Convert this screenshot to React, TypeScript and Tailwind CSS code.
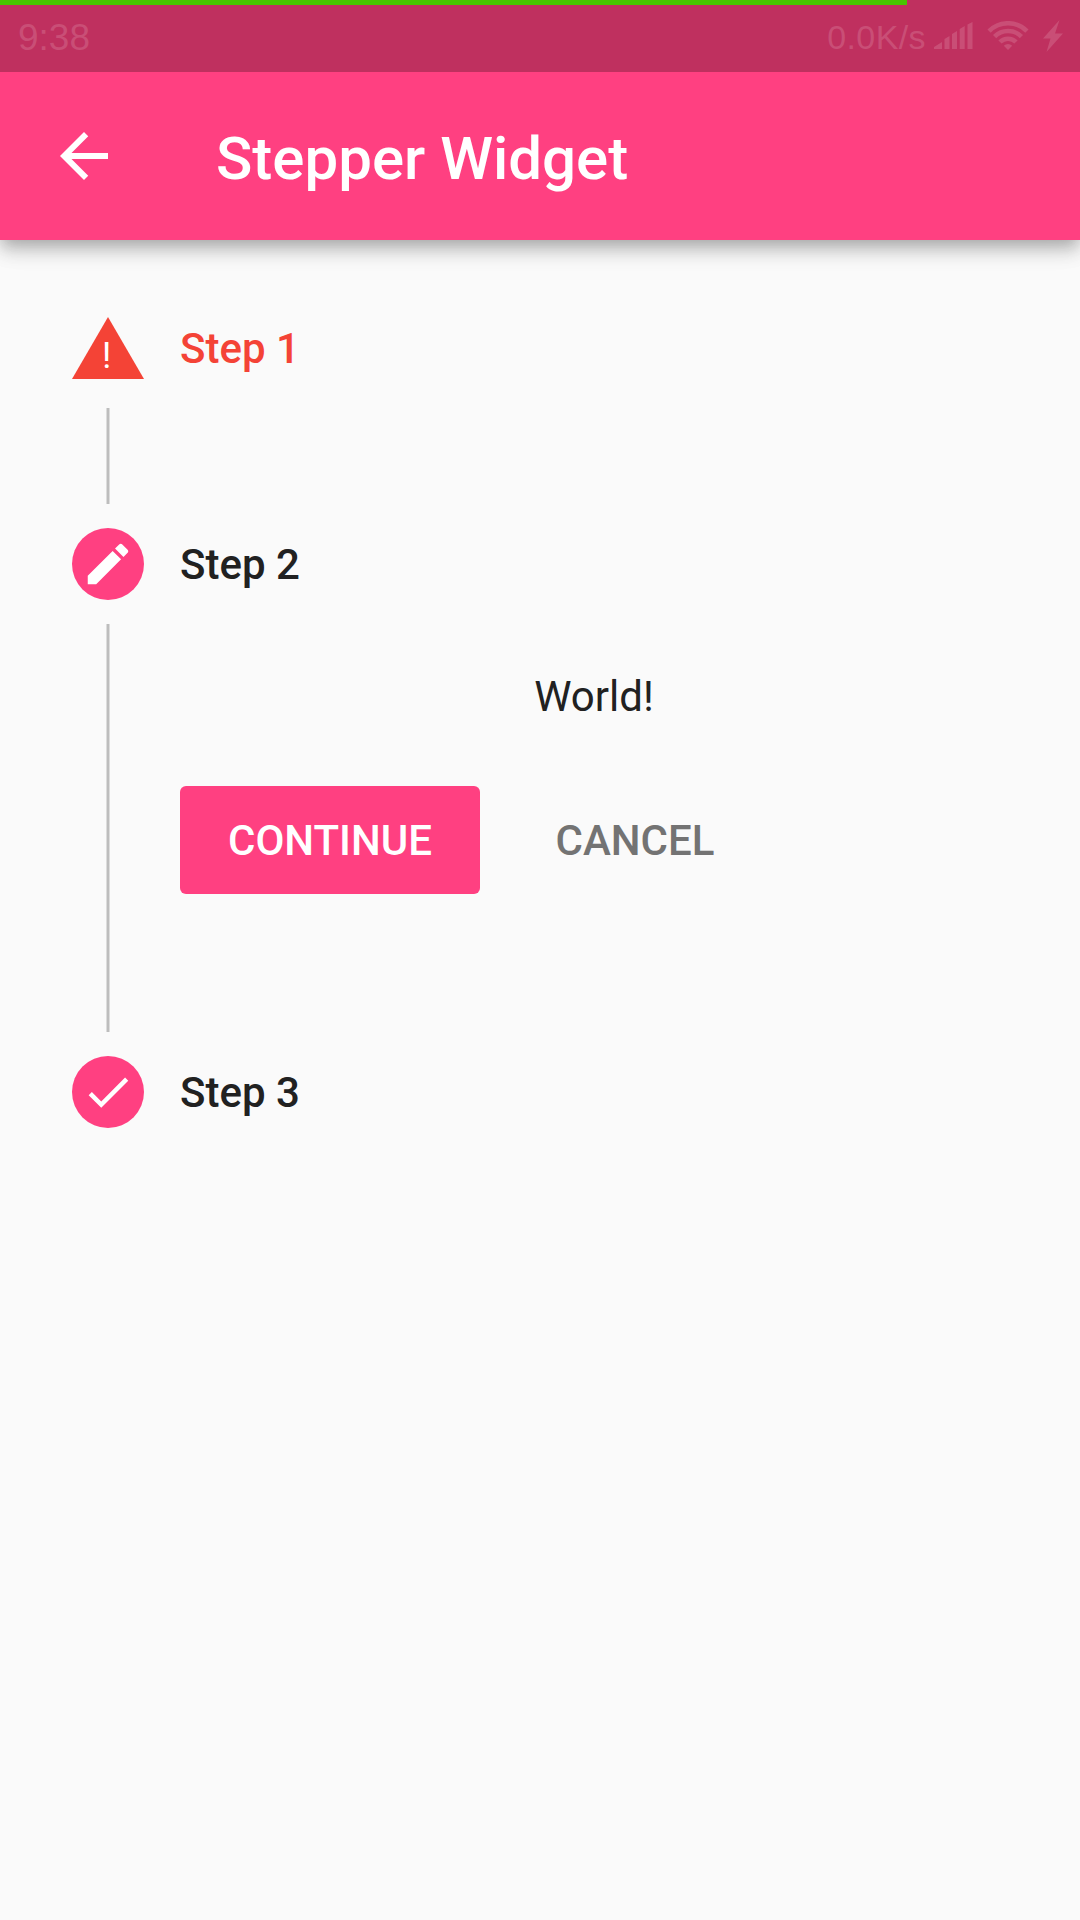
import React from "react";

function StatusBar() {
  return (
    <div className="relative z-10 flex h-[72px] items-center justify-between bg-[#bf305f] pl-[18px] pr-[17px] text-[#c94e76]">
      <div className="absolute left-0 top-0 h-[5px] w-[907px] bg-[#48c400]" />
      <span className="pt-1 font-['Liberation_Sans',sans-serif] text-[37px] leading-[40px]">9:38</span>
      <div className="flex items-center">
        <span className="pt-0.5 font-['Liberation_Sans',sans-serif] text-[34px] leading-[40px] tracking-[0.4px]">0.0K/s</span>
        <svg className="ml-2 h-[28px] w-[39px]" viewBox="0 0 39 28" fill="currentColor">
          <path d="M0 27v-2l8-5v7zM10.5 27V17l5-3v13zM18 27V12l5-3v18zM25.7 27V7l5-3v23zM33.5 27V2.500l5-2.500v27z" />
        </svg>
        <svg className="ml-[14px] h-[30px] w-[42px]" viewBox="0 0 42 30" fill="none" stroke="currentColor" strokeWidth="4.6">
          <path d="M2.100 10.100a26.700 26.700 0 0 1 37.800 0M7.600 15.600a19 19 0 0 1 26.800 0M13 21a11.300 11.300 0 0 1 16 0" />
          <path d="M16.800 24.800a6 6 0 0 1 8.400 0L21 29z" fill="currentColor" stroke="none" />
        </svg>
        <svg className="ml-[14px] h-[32px] w-[20px]" viewBox="0 0 20 32" fill="currentColor">
          <path d="M16.500 0 0 18.500h7.500L3.500 32 20 13.500h-8z" />
        </svg>
      </div>
    </div>
  );
}

function AppBar() {
  return (
    <header className="flex h-[168px] items-center bg-[#ff4081] pl-12 text-white shadow-[0_6px_14px_-3px_rgba(0,0,0,0.18),0_12px_17px_0_rgba(0,0,0,0.14),0_3px_30px_0_rgba(0,0,0,0.1)]">
      <svg className="size-[72px]" viewBox="0 0 24 24" fill="currentColor">
        <path d="M20 11H7.83l5.59-5.59L12 4l-8 8 8 8 1.41-1.41L7.83 13H20v-2z" />
      </svg>
      <h1 className="ml-24 pt-[5px] text-[60px] font-medium leading-[70px]">Stepper Widget</h1>
    </header>
  );
}

function Connector({ children }: { children?: React.ReactNode }) {
  return (
    <div className="my-6 flex">
      <div className="flex w-[72px] shrink-0 justify-center">
        <div className="w-1 border-x border-[#dcdcdc] bg-[#bdbdbd]" />
      </div>
      <div className="ml-9 flex-1">{children}</div>
    </div>
  );
}

function StepHeader({ icon, title, error }: { icon: React.ReactNode; title: string; error?: boolean }) {
  return (
    <div className="flex h-[72px] items-center gap-9">
      {icon}
      <h2
        className={
          error
            ? "pt-0.5 text-[42px] font-medium leading-[50px] text-[#f44336]"
            : "pt-0.5 text-[42px] font-medium leading-[50px] text-[#212121]"
        }
      >
        {title}
      </h2>
    </div>
  );
}

function CircleIcon({ path }: { path: string }) {
  return (
    <div className="flex size-[72px] items-center justify-center rounded-full bg-[#ff4081] text-white">
      <svg className="size-[54px]" viewBox="0 0 24 24" fill="currentColor">
        <path d={path} />
      </svg>
    </div>
  );
}

function ErrorIcon() {
  return (
    <div className="relative h-[62px] w-[72px]">
      <svg className="h-full w-full" viewBox="0 0 72 62.35" preserveAspectRatio="none">
        <path d="M0 62.35h72L36 0z" fill="#f44336" />
      </svg>
      <span className="absolute left-[30px] top-[18px] text-[36px] leading-[42px] text-white">!</span>
    </div>
  );
}

export default function App() {
  return (
    <div className="h-[1920px] w-[1080px] overflow-hidden bg-[#fafafa] font-[Roboto,sans-serif]">
      <StatusBar />
      <AppBar />
      <main className="px-[72px] pt-[72px]">
        <StepHeader icon={<ErrorIcon />} title="Step 1" error />
        <Connector>
          <div className="h-24" />
        </Connector>
        <StepHeader
          icon={<CircleIcon path="M3 17.25V21h3.75L17.81 9.94l-3.75-3.75L3 17.25zM20.71 7.04c.39-.39.39-1.02 0-1.41l-2.34-2.34c-.39-.39-1.02-.39-1.41 0l-1.83 1.83 3.75 3.75 1.83-1.83z" />}
          title="Step 2"
        />
        <Connector>
          <div className="h-[408px] pt-12">
            <p className="text-center text-[42px] leading-[49px] text-[#212121]">World!</p>
            <div className="mt-[65px] flex gap-6 text-[42px] font-medium leading-[49px]">
              <button className="h-[108px] w-[300px] rounded-[6px] bg-[#ff4081] text-white">CONTINUE</button>
              <button className="h-[108px] w-[262px] text-[#737373]">CANCEL</button>
            </div>
          </div>
        </Connector>
        <StepHeader icon={<CircleIcon path="M9 16.17L4.83 12l-1.42 1.41L9 19 21 7l-1.41-1.41z" />} title="Step 3" />
      </main>
    </div>
  );
}
